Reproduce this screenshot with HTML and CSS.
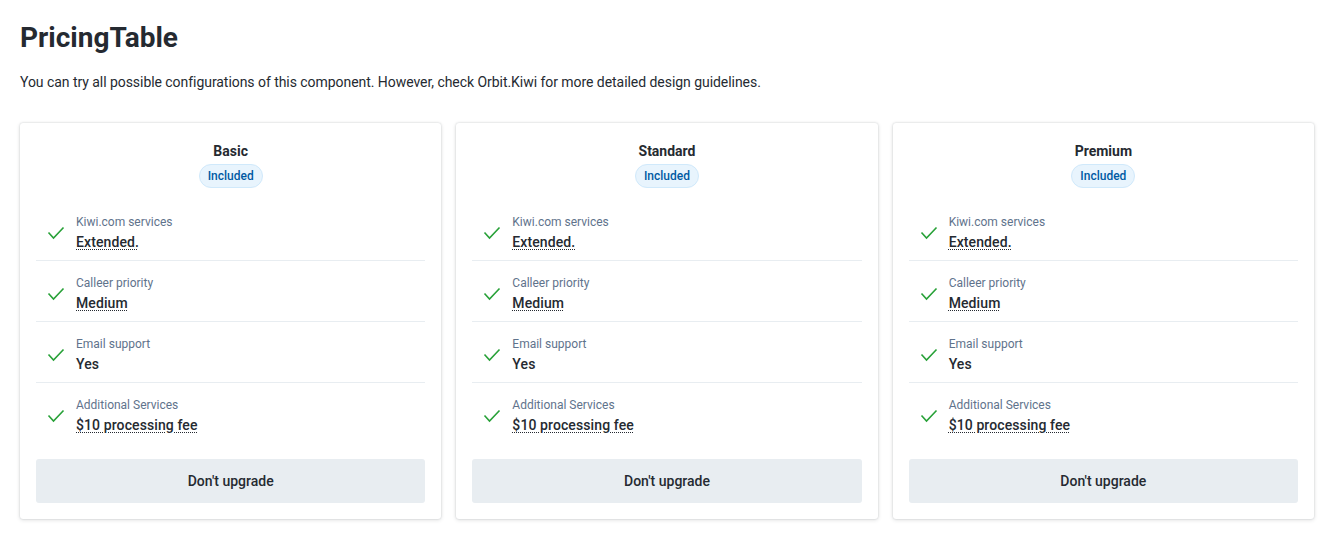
FILE: index.html
```html
<!DOCTYPE html>
<html>
<head>
<meta charset="utf-8">
<link rel="stylesheet" href="styles.css">
</head>
<body>
<main class="page">
  <h1 class="title">PricingTable</h1>
  <p class="lead">You can try all possible configurations of this component. However, check Orbit.Kiwi for more detailed design guidelines.</p>
  <div class="table">
    <section class="card">
      <div class="card-head">
        <h2 class="plan">Basic</h2>
        <span class="badge">Included</span>
      </div>
      <ul class="list">
        <li class="row"><span class="icon"><svg viewBox="0 0 24 24" width="24" height="24"><polyline points="4.5,11.5 9.5,17 19.5,6.5" fill="none" stroke="#28a138" stroke-width="1.6"/></svg></span><div class="text"><span class="label">Kiwi.com services</span><span class="value dotted">Extended.</span></div></li>
        <li class="row"><span class="icon"><svg viewBox="0 0 24 24" width="24" height="24"><polyline points="4.5,11.5 9.5,17 19.5,6.5" fill="none" stroke="#28a138" stroke-width="1.6"/></svg></span><div class="text"><span class="label">Calleer priority</span><span class="value dotted">Medium</span></div></li>
        <li class="row"><span class="icon"><svg viewBox="0 0 24 24" width="24" height="24"><polyline points="4.5,11.5 9.5,17 19.5,6.5" fill="none" stroke="#28a138" stroke-width="1.6"/></svg></span><div class="text"><span class="label">Email support</span><span class="value">Yes</span></div></li>
        <li class="row"><span class="icon"><svg viewBox="0 0 24 24" width="24" height="24"><polyline points="4.5,11.5 9.5,17 19.5,6.5" fill="none" stroke="#28a138" stroke-width="1.6"/></svg></span><div class="text"><span class="label">Additional Services</span><span class="value dotted">$10 processing fee</span></div></li>
      </ul>
      <button class="btn">Don't upgrade</button>
    </section>
    <section class="card">
      <div class="card-head">
        <h2 class="plan">Standard</h2>
        <span class="badge">Included</span>
      </div>
      <ul class="list">
        <li class="row"><span class="icon"><svg viewBox="0 0 24 24" width="24" height="24"><polyline points="4.5,11.5 9.5,17 19.5,6.5" fill="none" stroke="#28a138" stroke-width="1.6"/></svg></span><div class="text"><span class="label">Kiwi.com services</span><span class="value dotted">Extended.</span></div></li>
        <li class="row"><span class="icon"><svg viewBox="0 0 24 24" width="24" height="24"><polyline points="4.5,11.5 9.5,17 19.5,6.5" fill="none" stroke="#28a138" stroke-width="1.6"/></svg></span><div class="text"><span class="label">Calleer priority</span><span class="value dotted">Medium</span></div></li>
        <li class="row"><span class="icon"><svg viewBox="0 0 24 24" width="24" height="24"><polyline points="4.5,11.5 9.5,17 19.5,6.5" fill="none" stroke="#28a138" stroke-width="1.6"/></svg></span><div class="text"><span class="label">Email support</span><span class="value">Yes</span></div></li>
        <li class="row"><span class="icon"><svg viewBox="0 0 24 24" width="24" height="24"><polyline points="4.5,11.5 9.5,17 19.5,6.5" fill="none" stroke="#28a138" stroke-width="1.6"/></svg></span><div class="text"><span class="label">Additional Services</span><span class="value dotted">$10 processing fee</span></div></li>
      </ul>
      <button class="btn">Don't upgrade</button>
    </section>
    <section class="card">
      <div class="card-head">
        <h2 class="plan">Premium</h2>
        <span class="badge">Included</span>
      </div>
      <ul class="list">
        <li class="row"><span class="icon"><svg viewBox="0 0 24 24" width="24" height="24"><polyline points="4.5,11.5 9.5,17 19.5,6.5" fill="none" stroke="#28a138" stroke-width="1.6"/></svg></span><div class="text"><span class="label">Kiwi.com services</span><span class="value dotted">Extended.</span></div></li>
        <li class="row"><span class="icon"><svg viewBox="0 0 24 24" width="24" height="24"><polyline points="4.5,11.5 9.5,17 19.5,6.5" fill="none" stroke="#28a138" stroke-width="1.6"/></svg></span><div class="text"><span class="label">Calleer priority</span><span class="value dotted">Medium</span></div></li>
        <li class="row"><span class="icon"><svg viewBox="0 0 24 24" width="24" height="24"><polyline points="4.5,11.5 9.5,17 19.5,6.5" fill="none" stroke="#28a138" stroke-width="1.6"/></svg></span><div class="text"><span class="label">Email support</span><span class="value">Yes</span></div></li>
        <li class="row"><span class="icon"><svg viewBox="0 0 24 24" width="24" height="24"><polyline points="4.5,11.5 9.5,17 19.5,6.5" fill="none" stroke="#28a138" stroke-width="1.6"/></svg></span><div class="text"><span class="label">Additional Services</span><span class="value dotted">$10 processing fee</span></div></li>
      </ul>
      <button class="btn">Don't upgrade</button>
    </section>
  </div>
</main>
</body>
</html>
```

FILE: styles.css
```css
* { box-sizing: border-box; }
html, body { margin: 0; padding: 0; background: #fff; }
body {
  font-family: Roboto, "Liberation Sans", sans-serif;
  color: #252a31;
}
.page { padding: 20px; }
.title {
  margin: 0;
  font-size: 28px;
  line-height: 36px;
  font-weight: 700;
  color: #252a31;
}
.lead {
  margin: 16px 0 0 0;
  font-size: 14px;
  line-height: 20px;
  letter-spacing: -0.05px;
}
.table {
  margin-top: 31px;
  display: grid;
  grid-template-columns: repeat(3, 1fr);
  gap: 15px;
}
.card {
  background: #fff;
  border-radius: 3px;
  box-shadow: 0 0 2px 0 rgba(37,42,49,.2), 0 1px 4px 0 rgba(37,42,49,.14);
  padding: 18px 16px 16px 16px;
  display: flex;
  flex-direction: column;
}
.card-head {
  display: flex;
  flex-direction: column;
  align-items: center;
  gap: 3px;
}
.plan {
  margin: 0;
  font-size: 14px;
  line-height: 20px;
  font-weight: 700;
}
.badge {
  display: inline-flex;
  align-items: center;
  height: 24px;
  padding: 0 8px;
  border-radius: 12px;
  background: #e8f4fd;
  border: 1px solid #d0e9fb;
  color: #005aa3;
  font-size: 12px;
  font-weight: 500;
}
.list {
  list-style: none;
  margin: 12px 0 0 0;
  padding: 0;
}
.row {
  display: flex;
  align-items: center;
  gap: 8px;
  padding: 14px 8px 8px 8px;
  border-bottom: 1px solid #e8edf1;
}
.row:last-child { border-bottom: 0; }
.icon { display: flex; width: 24px; height: 24px; }
.text { display: flex; flex-direction: column; gap: 2px; }
.label {
  font-size: 12px;
  line-height: 16px;
  color: #5f738c;
}
.value {
  font-size: 14px;
  line-height: 20px;
  font-weight: 500;
  color: #252a31;
  align-self: flex-start;
  letter-spacing: 0.1px;
}
.dotted {
  text-decoration: underline dotted;
  text-underline-offset: 2px;
  text-decoration-thickness: 1px;
}
.btn {
  margin-top: 16px;
  height: 44px;
  width: 100%;
  border: 0;
  border-radius: 3px;
  background: #e8edf1;
  color: #252a31;
  font-family: inherit;
  font-size: 14px;
  font-weight: 500;
}
```
